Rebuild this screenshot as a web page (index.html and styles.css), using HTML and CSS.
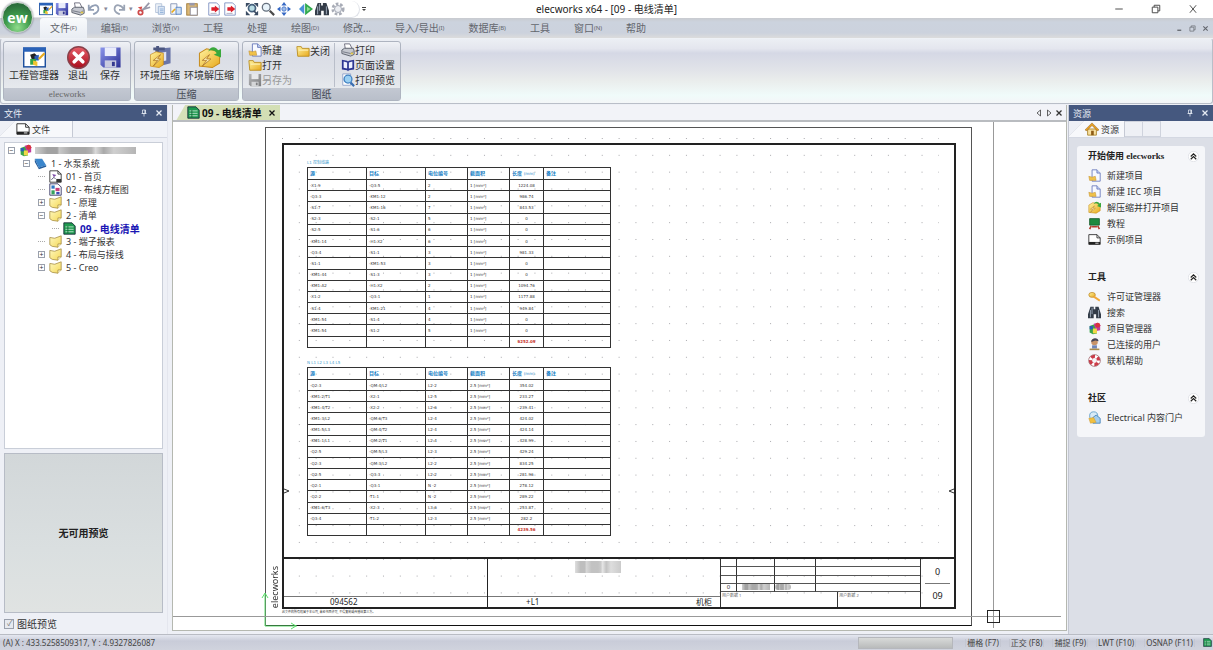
FILE: index.html
```html
<!DOCTYPE html>
<html lang="zh-CN">
<head>
<meta charset="utf-8">
<title>elecworks x64 - [09 - 电线清单]</title>
<link rel="stylesheet" href="styles.css">
</head>
<body>
<svg class="defs" aria-hidden="true">
  <defs>
    <linearGradient id="g-red" x1="0" y1="0" x2="0" y2="1"><stop offset="0" stop-color="#e8606a"/><stop offset="1" stop-color="#a80c1c"/></linearGradient>
    <linearGradient id="g-yel" x1="0" y1="0" x2="1" y2="1"><stop offset="0" stop-color="#fff3a0"/><stop offset="1" stop-color="#e8a91c"/></linearGradient>
    <linearGradient id="g-blu" x1="0" y1="0" x2="1" y2="1"><stop offset="0" stop-color="#8c96ec"/><stop offset="1" stop-color="#2b2f94"/></linearGradient>
    <linearGradient id="g-note" x1="0" y1="0" x2="1" y2="1"><stop offset="0" stop-color="#fff9c0"/><stop offset="1" stop-color="#f4d858"/></linearGradient>
  </defs>
  <symbol id="manager" viewBox="0 0 16 16"><rect x=".5" y="1.500" width="15" height="13" fill="#fff" stroke="#1d4f9e"/><path d="M0 1h16v3H0z" fill="#2a62b8"/><path d="M5 6l3-1 2 2v2H6z" fill="#222"/><path d="M8 7l3-1v4H8z" fill="#2c5db8"/><path d="M5 9h4v4H5z" fill="#35a548"/><path d="M7 10l3 1v3l-3-1z" fill="#f4c430"/><path d="M15 5l-4 4" stroke="#e8a91c" stroke-width="1.500"/></symbol>
  <symbol id="save" viewBox="0 0 16 16"><path d="M1 1h14v14H3l-2-2z" fill="url(#g-blu)"/><path d="M4 1h8v6H4z" fill="#e9ecfb"/><path d="M4 10h8v5H4z" fill="#c9cbe0"/><path d="M9 11h2v3H9z" fill="#34388f"/></symbol>
  <symbol id="print" viewBox="0 0 16 16"><path d="M4 1h6l3 6H5z" fill="#fff" stroke="#667"/><path d="M1 8l3-2h10l1 3v4l-4 2-10-3z" fill="#c4c7cf" stroke="#555a66"/><path d="M2 10l9 2 3-2" stroke="#6f7480" fill="none"/><path d="M11 11h3v2h-3z" fill="#e5c94c"/></symbol>
  <symbol id="undo" viewBox="0 0 16 16"><path d="M2 3v6h6M3 8c2-5 9-6 10-1s-4 6-6 7" fill="none" stroke="#929fb5" stroke-width="2"/></symbol>
  <symbol id="redo" viewBox="0 0 16 16"><path d="M14 3v6H8M13 8C11 3 4 2 3 7s4 6 6 7" fill="none" stroke="#9ba4b4" stroke-width="2"/></symbol>
  <symbol id="cut" viewBox="0 0 16 16"><path d="M14 1L5 11M15 6L5 9" stroke="#99a" stroke-width="2"/><circle cx="4" cy="12" r="2.500" fill="none" stroke="#cf4a4a" stroke-width="2"/><path d="M1 6l5-1-1 4z" fill="#d8504c"/></symbol>
  <symbol id="copy" viewBox="0 0 16 16"><path d="M3 2h7v10H3z" fill="#eef2f8" stroke="#b4c2d8"/><path d="M6 5h7v9H6z" fill="#dbe6f4" stroke="#9cb2d2"/><path d="M8 8h4M8 10h4M8 12h4" stroke="#8fb0d8"/></symbol>
  <symbol id="copyp" viewBox="0 0 16 16"><path d="M2 2h7v12H2z" fill="#f4f6fa" stroke="#8492b4"/><path d="M8 6h6v8H8z" fill="#cfe0f4" stroke="#4f7fc0"/><path d="M3 12l4-4" stroke="#e8a91c" stroke-width="2"/></symbol>
  <symbol id="paste" viewBox="0 0 16 16"><rect x="2" y="2" width="12" height="13" fill="#dcb876" stroke="#9c7534"/><path d="M5 1h6v3H5z" fill="#99a"/><path d="M6 6h8v9H6z" fill="#fff" stroke="#889"/></symbol>
  <symbol id="page" viewBox="0 0 16 16"><path d="M2 1h9l3 3v11H2z" fill="#fff" stroke="#7b8fc0"/><path d="M4 13h7" stroke="#aab"/><path d="M5 6h4V4l5 4-5 4v-2H5z" fill="#dc1f2b"/></symbol>
  <symbol id="zoomfit" viewBox="0 0 16 16"><path d="M1 1h5L1 6zM15 1v5l-5-5zM1 15v-5l5 5zM15 15h-5l5-5z" fill="#3a4b63"/><circle cx="8" cy="7" r="4" fill="#b8dce4" stroke="#47627e" stroke-width="2"/><path d="M10 10l4 4" stroke="#3a4b63" stroke-width="2"/></symbol>
  <symbol id="lens" viewBox="0 0 16 16"><circle cx="6" cy="6" r="4.500" fill="#e8f3fa" stroke="#66707e" stroke-width="1.500"/><path d="M10 10l5 5" stroke="#4a4a4a" stroke-width="2.500"/></symbol>
  <symbol id="move" viewBox="0 0 16 16"><path d="M8 0l3 4H5zM8 16l3-4H5zM0 8l4-3v6zM16 8l-4-3v6z" fill="#3568c4"/><circle cx="8" cy="8" r="2.500" fill="#9dbcea" stroke="#4a77c8"/></symbol>
  <symbol id="swap" viewBox="0 0 16 16"><path d="M0 8l6-6v12z" fill="#4b91d8"/><path d="M7 1v14l9-7z" fill="#2fa84c"/><path d="M9 5v6l4-3z" fill="#8fdf94"/></symbol>
  <symbol id="bino" viewBox="0 0 16 16"><path d="M3 1h4v3h2V1h4l3 9v5h-6v-5H7v5H0v-5z" fill="#333c48"/><path d="M3 5v9M5 2v8M13 5v9" stroke="#a9b6c6"/></symbol>
  <symbol id="gear" viewBox="0 0 16 16"><circle cx="8" cy="8" r="6" fill="none" stroke="#a8acb6" stroke-width="3" stroke-dasharray="3 2"/><circle cx="8" cy="8" r="4" fill="#eceef2" stroke="#989daa"/></symbol>
  <symbol id="quit" viewBox="0 0 16 16"><circle cx="8" cy="8" r="7.500" fill="url(#g-red)" stroke="#88404a"/><path d="M5 5l6 6M11 5l-6 6" stroke="#fff" stroke-width="2.500" stroke-linecap="round"/></symbol>
  <symbol id="zip" viewBox="0 0 16 16"><path d="M4 2l11-1v11l-8 2z" fill="#6975a8"/><path d="M7 5l5-1v6l-4 1z" fill="#dfe3f2"/><path d="M3 1h8v2H3zM5 0h2v4H5z" fill="#4b5680"/><path d="M1 6l4-2 5 1v8l-3 2-6-1z" fill="url(#g-yel)" stroke="#c78c1c" stroke-width=".5"/><path d="M8 6L3 10h3l-3 4 5-5H6z" fill="#fff3b8" stroke="#a5691c" stroke-width=".5"/></symbol>
  <symbol id="unzip" viewBox="0 0 16 16"><path d="M1 5l5-3 9 2v8l-5 3-9-1z" fill="url(#g-yel)" stroke="#c78c1c" stroke-width=".7"/><path d="M7 4c2-5 6-3 7-1l2-1v6l-5-2 2-1c-1-2-4-3-6-1z" fill="#3aa83c"/><path d="M8 6L3 10h3l-3 4 6-5H6z" fill="#fff3b8" stroke="#a5691c" stroke-width=".5"/></symbol>
  <symbol id="newdoc" viewBox="0 0 16 16"><path d="M5 1h6l4 4v10H5z" fill="#f7f9ff" stroke="#6173b8"/><path d="M11 1v4h4" fill="#c4d2f4" stroke="#6173b8"/><path d="M1 9l4 1 4-1 1 5H2z" fill="#f0c24a" stroke="#c08c2c" stroke-width=".6"/></symbol>
  <symbol id="folder" viewBox="0 0 16 16"><path d="M1 3h5l1 2h8v9H2z" fill="url(#g-yel)" stroke="#b98c1d"/><path d="M3 7h11" stroke="#fff8c8"/></symbol>
  <symbol id="book" viewBox="0 0 16 16"><path d="M1 2l6 1 1 1 1-1 6-1v11l-6 1-1 1-1-1-6-1z" fill="#2d3692"/><path d="M3 4l4 1v7l-4-1zM9 5l4-1v7l-4 1z" fill="#eef1ff"/></symbol>
  <symbol id="preview" viewBox="0 0 16 16"><path d="M2 1h9v13H2z" fill="#fff" stroke="#8ea0c8"/><circle cx="8" cy="7" r="4.500" fill="#9bd0f2" stroke="#3f7fc0" stroke-width="1.500"/><path d="M11 11l4 4" stroke="#3a6eb0" stroke-width="2.500"/></symbol>
  <symbol id="sheet" viewBox="0 0 16 16"><path d="M1 2h10l4 4v8H1z" fill="#fff" stroke="#222"/><path d="M1 11h14v3H1z" fill="#222"/><path d="M9 12h4v1H9z" fill="#fff"/><path d="M11 2v4h4" fill="none" stroke="#222"/></symbol>
  <symbol id="project" viewBox="0 0 16 16"><path d="M2 5l5-2 4 2v9l-5 1-4-2z" fill="#3aa54a"/><path d="M7 2l5-1 3 3v6l-5 1z" fill="#c23a9c"/><circle cx="12" cy="4" r="3" fill="#d8333f"/><path d="M6 8h5v6H6z" fill="#f2d848"/><path d="M2 5h4v4H2z" fill="#2c5db8"/></symbol>
  <symbol id="bookb" viewBox="0 0 16 16"><path d="M1 2l9 0 5 8-9 3z" fill="#3b86cc"/><path d="M1 2v4l5 9 9-3v-2l-9 3z" fill="#235c9c"/></symbol>
  <symbol id="cover" viewBox="0 0 16 16"><path d="M1 1h10l4 4v10H1z" fill="#fff" stroke="#222"/><path d="M11 1v4h4" fill="none" stroke="#222"/><path d="M4 5l5 1-3 3z" fill="#7d4ca8"/><path d="M3 12l3-3 2 2" stroke="#335" fill="none"/><path d="M9 11h6v4H9z" fill="#333"/></symbol>
  <symbol id="diagram" viewBox="0 0 16 16"><path d="M1 1h10l4 4v10H1z" fill="#fff" stroke="#225"/><path d="M3 3h4v4H3z" fill="#2f78c4"/><path d="M8 6h5v4H8z" fill="#c83f7c"/><path d="M3 9h4v5H3z" fill="#35a05c"/><path d="M9 11h4v3H9z" fill="#3b4bb8"/></symbol>
  <symbol id="note" viewBox="0 0 16 16"><path d="M1 3l6 1 8-3v10l-4 4-7-1-3-2z" fill="url(#g-note)" stroke="#a8904a"/><path d="M15 11h-4v4" fill="#fffad0" stroke="#a8904a"/></symbol>
  <symbol id="list" viewBox="0 0 16 16"><path d="M1 1h10l4 4v10H1z" fill="#1f9a50" stroke="#123"/><path d="M3 6h10M3 9h10M3 12h10" stroke="#cfeedd"/><path d="M6 5v9" stroke="#0e5a30"/></symbol>
  <symbol id="home" viewBox="0 0 16 16"><path d="M3 8h10v7H3z" fill="#f8e0a0" stroke="#a8842a"/><path d="M0 9l8-8 8 8-2 1-6-6-6 6z" fill="#e8a022" stroke="#8c5a14" stroke-width=".6"/><path d="M7 10h3v5H7z" fill="#8c5a14"/></symbol>
  <symbol id="board" viewBox="0 0 16 16"><path d="M2 2h12v8H2z" fill="#1f8a3f" stroke="#145a2a"/><path d="M4 11l-2 4M12 11l2 4M5 12h6" stroke="#b23c2c" stroke-width="2"/></symbol>
  <symbol id="key" viewBox="0 0 16 16"><ellipse cx="5" cy="6" rx="4" ry="3" fill="url(#g-yel)" stroke="#c08c2c"/><path d="M8 7l7 5-1 2-8-5z" fill="#f0a83a"/></symbol>
  <symbol id="user" viewBox="0 0 16 16"><circle cx="8" cy="5" r="4" fill="#c89468"/><path d="M4 5c0-6 9-6 9-1L9 3z" fill="#445"/><path d="M5 9h6v4H5z" fill="#6f86b8"/><path d="M2 14h12" stroke="#a88c4c" stroke-width="2"/></symbol>
  <symbol id="buoy" viewBox="0 0 16 16"><circle cx="8" cy="8" r="5" fill="none" stroke="#cc3b48" stroke-width="4"/><circle cx="8" cy="8" r="5" fill="none" stroke="#fff" stroke-width="4" stroke-dasharray="3 4.850"/><circle cx="8" cy="8" r="7.300" fill="none" stroke="#8c4a52" stroke-width=".7"/></symbol>
  <symbol id="portal" viewBox="0 0 16 16"><circle cx="7" cy="6" r="5" fill="#d8eaf6" stroke="#589ac8"/><path d="M6 8l4-3 5 4v6H6z" fill="#a4cdec" stroke="#3f80b8"/><path d="M1 9l6-1 3 6-7 1z" fill="#f0c040" stroke="#c08c2c" stroke-width=".5"/></symbol>
  <symbol id="pin" viewBox="0 0 16 16"><path d="M5 2h6v7H5zM3 9h10M8 9v6" fill="none" stroke="currentColor" stroke-width="1.500"/><path d="M9 2h2v7H9z" fill="currentColor"/></symbol>
  <symbol id="cross" viewBox="0 0 16 16"><path d="M3 3l10 10M13 3L3 13" stroke="currentColor" stroke-width="2.500"/></symbol>
  <symbol id="thin" viewBox="0 0 16 16"><path d="M3 2l10 12M13 2L3 14" stroke="currentColor" stroke-width="1.500"/></symbol>
  <symbol id="restore" viewBox="0 0 16 16"><path d="M5 5V2h9v9h-3M2 5h9v9H2z" fill="none" stroke="currentColor" stroke-width="1.500"/></symbol>
  <symbol id="minus" viewBox="0 0 16 16"><path d="M2 8h12" stroke="currentColor" stroke-width="1.500"/></symbol>
  <symbol id="low" viewBox="0 0 16 16"><path d="M3 12h9" stroke="currentColor" stroke-width="3"/></symbol>
  <symbol id="left" viewBox="0 0 16 16"><path d="M11 2v12L4 8z" fill="none" stroke="currentColor" stroke-width="1.500"/></symbol>
  <symbol id="right" viewBox="0 0 16 16"><path d="M5 2v12l7-6z" fill="none" stroke="currentColor" stroke-width="1.500"/></symbol>
  <symbol id="chev" viewBox="0 0 16 16"><circle cx="8" cy="8" r="7.500" fill="#fff" stroke="#d8dbe2"/><path d="M4 8l4-4 4 4M4 12l4-4 4 4" fill="none" stroke="#222" stroke-width="1.700"/></symbol>
  <symbol id="more" viewBox="0 0 16 16"><path d="M4 5h8" stroke="#444" stroke-width="2"/><path d="M4 8h8l-4 4z" fill="#444"/></symbol>
</svg>

<div class="app">
  <header class="titlebar">
    <button class="orb" aria-label="elecworks">ew</button>
    <div class="quick">
      <button aria-label="工程管理器"><svg><use href="#manager"/></svg></button>
      <button aria-label="保存"><svg><use href="#save"/></svg></button>
      <button aria-label="打印"><svg><use href="#print"/></svg></button>
      <button class="drop" aria-label="撤销"><svg><use href="#undo"/></svg></button>
      <button class="drop" aria-label="重做"><svg><use href="#redo"/></svg></button>
      <button aria-label="剪切"><svg><use href="#cut"/></svg></button>
      <button aria-label="复制"><svg><use href="#copy"/></svg></button>
      <button aria-label="特殊复制"><svg><use href="#copyp"/></svg></button>
      <button aria-label="粘贴"><svg><use href="#paste"/></svg></button>
      <button class="apart" aria-label="上一图纸"><svg><use href="#page"/></svg></button>
      <button aria-label="下一图纸"><svg><use href="#page"/></svg></button>
      <button class="apart" aria-label="缩放至适合"><svg><use href="#zoomfit"/></svg></button>
      <button aria-label="缩放"><svg><use href="#lens"/></svg></button>
      <button aria-label="平移"><svg><use href="#move"/></svg></button>
      <button class="apart" aria-label="转到"><svg><use href="#swap"/></svg></button>
      <button aria-label="搜索"><svg><use href="#bino"/></svg></button>
      <button aria-label="设置"><svg><use href="#gear"/></svg></button>
    </div>
    <button class="more" aria-label="自定义"><svg><use href="#more"/></svg></button>
    <h1 class="caption">elecworks x64 - [09 - 电线清单]</h1>
    <div class="winbtns">
      <button aria-label="最小化"><svg><use href="#minus"/></svg></button>
      <button aria-label="还原"><svg><use href="#restore"/></svg></button>
      <button aria-label="关闭"><svg><use href="#thin"/></svg></button>
    </div>
  </header>

  <nav class="menu">
    <button class="on">文件<small>(F)</small></button>
    <button>编辑<small>(E)</small></button>
    <button>浏览<small>(V)</small></button>
    <button>工程</button>
    <button>处理</button>
    <button>绘图<small>(D)</small></button>
    <button>修改...</button>
    <button>导入/导出<small>(I)</small></button>
    <button>数据库<small>(B)</small></button>
    <button>工具</button>
    <button>窗口<small>(N)</small></button>
    <button>帮助</button>
    <div class="docbtns">
      <button aria-label="最小化图纸"><svg><use href="#low"/></svg></button>
      <button aria-label="还原图纸"><svg><use href="#restore"/></svg></button>
      <button aria-label="关闭图纸"><svg><use href="#cross"/></svg></button>
    </div>
  </nav>

  <div class="ribbon">
    <section class="group">
      <div class="tools big">
        <button><svg><use href="#manager"/></svg>工程管理器</button>
        <button><svg><use href="#quit"/></svg>退出</button>
        <button><svg><use href="#save"/></svg>保存</button>
      </div>
      <h2 class="latin">elecworks</h2>
    </section>
    <section class="group">
      <div class="tools big tight">
        <button><svg><use href="#zip"/></svg>环境压缩</button>
        <button><svg><use href="#unzip"/></svg>环境解压缩</button>
      </div>
      <h2>压缩</h2>
    </section>
    <section class="group">
      <div class="tools small">
        <div class="stack">
          <button><svg><use href="#newdoc"/></svg>新建</button>
          <button><svg><use href="#folder"/></svg>打开</button>
          <button class="off" disabled><svg><use href="#save"/></svg>另存为</button>
        </div>
        <div class="stack">
          <button><svg><use href="#folder"/></svg>关闭</button>
        </div>
        <div class="stack ruled">
          <button><svg><use href="#print"/></svg>打印</button>
          <button><svg><use href="#book"/></svg>页面设置</button>
          <button><svg><use href="#preview"/></svg>打印预览</button>
        </div>
      </div>
      <h2>图纸</h2>
    </section>
  </div>

  <div class="work">
    <aside class="side files">
      <div class="bar"><span>文件</span><button aria-label="固定"><svg><use href="#pin"/></svg></button><button aria-label="关闭"><svg><use href="#cross"/></svg></button></div>
      <div class="tabs"><button class="tab"><svg><use href="#sheet"/></svg>文件</button></div>
      <div class="treebox">
        <ul class="tree">
          <li><i class="tw">−</i><svg><use href="#project"/></svg><span class="mosaic"></span></li>
          <li class="l1"><i class="tw">−</i><svg><use href="#bookb"/></svg>1 - 水泵系统</li>
          <li class="l2"><i class="ln"></i><svg><use href="#cover"/></svg>01 - 首页</li>
          <li class="l2"><i class="ln"></i><svg><use href="#diagram"/></svg>02 - 布线方框图</li>
          <li class="l2"><i class="tw">+</i><svg><use href="#note"/></svg>1 - 原理</li>
          <li class="l2"><i class="tw">−</i><svg><use href="#note"/></svg>2 - 清单</li>
          <li class="l3 cur"><i class="ln"></i><svg><use href="#list"/></svg>09 - 电线清单</li>
          <li class="l2"><i class="ln"></i><svg><use href="#note"/></svg>3 - 端子报表</li>
          <li class="l2"><i class="tw">+</i><svg><use href="#note"/></svg>4 - 布局与接线</li>
          <li class="l2"><i class="tw">+</i><svg><use href="#note"/></svg>5 - Creo</li>
        </ul>
      </div>
      <div class="nopreview">无可用预览</div>
      <label class="check"><input type="checkbox" checked>图纸预览</label>
    </aside>

    <main class="doc">
      <div class="doctabs">
        <button class="doctab"><svg><use href="#list"/></svg>09 - 电线清单<svg class="x"><use href="#cross"/></svg></button>
        <div class="docnav">
          <button aria-label="上一个"><svg><use href="#left"/></svg></button>
          <button aria-label="下一个"><svg><use href="#right"/></svg></button>
          <button aria-label="关闭"><svg><use href="#cross"/></svg></button>
        </div>
      </div>
      <div class="canvas">
        <div class="sheet">
          <svg class="dots"><defs><pattern id="dot" width="16.830" height="16.830" patternUnits="userSpaceOnUse"><rect width="1" height="1" fill="#a9a9ac"/></pattern></defs><rect width="100%" height="100%" fill="url(#dot)"/></svg>
          <div class="brand">elecworks</div>
          <div class="frame">
            <svg class="mark l" viewBox="0 0 6 6"><path d="M0 1l5 2-5 2" fill="none" stroke="#333"/></svg>
            <svg class="mark r" viewBox="0 0 6 6"><path d="M6 1L1 3l5 2" fill="none" stroke="#333"/></svg>
            <div class="lists">
              <table class="wires first">
                <caption>L1 控制线路</caption>
                <thead><tr><th>源</th><th>目标</th><th>电位编号</th><th>截面积</th><th>长度 <small>(mm)</small></th><th>备注</th></tr></thead>
                <tbody>
                <tr><td>-X1:9</td><td>-Q3:5</td><td>2</td><td>1 [mm²]</td><td>1224.08</td><td></td></tr>
                <tr><td>-Q3:3</td><td>-KM1:12</td><td>2</td><td>1 [mm²]</td><td>986.74</td><td></td></tr>
                <tr><td>-S1:7</td><td>-KM1:16</td><td>7</td><td>1 [mm²]</td><td>843.53</td><td></td></tr>
                <tr><td>-S2:3</td><td>-S2:1</td><td>5</td><td>1 [mm²]</td><td>0</td><td></td></tr>
                <tr><td>-S2:5</td><td>-S1:6</td><td>6</td><td>1 [mm²]</td><td>0</td><td></td></tr>
                <tr><td>-KM1:14</td><td>-H1:X2</td><td>6</td><td>1 [mm²]</td><td>0</td><td></td></tr>
                <tr><td>-Q3:4</td><td>-S1:1</td><td>3</td><td>1 [mm²]</td><td>981.33</td><td></td></tr>
                <tr><td>-S1:1</td><td>-KM1:53</td><td>3</td><td>1 [mm²]</td><td>0</td><td></td></tr>
                <tr><td>-KM1:44</td><td>-S1:3</td><td>3</td><td>1 [mm²]</td><td>0</td><td></td></tr>
                <tr><td>-KM1:A2</td><td>-H1:X2</td><td>2</td><td>1 [mm²]</td><td>1094.76</td><td></td></tr>
                <tr><td>-X1:2</td><td>-Q3:1</td><td>1</td><td>1 [mm²]</td><td>1177.88</td><td></td></tr>
                <tr><td>-S1:4</td><td>-KM1:21</td><td>4</td><td>1 [mm²]</td><td>949.84</td><td></td></tr>
                <tr><td>-KM1:54</td><td>-S1:4</td><td>4</td><td>1 [mm²]</td><td>0</td><td></td></tr>
                <tr><td>-KM1:54</td><td>-S1:2</td><td>5</td><td>1 [mm²]</td><td>0</td><td></td></tr>
                <tr><td></td><td></td><td></td><td></td><td class="sum">6252.09</td><td></td></tr>
                </tbody>
              </table>
              <table class="wires">
                <caption>N L1 L2 L3 L4 L5</caption>
                <thead><tr><th>源</th><th>目标</th><th>电位编号</th><th>截面积</th><th>长度 <small>(mm)</small></th><th>备注</th></tr></thead>
                <tbody>
                <tr><td>-Q2:3</td><td>-QM:4/L2</td><td>L2-2</td><td>2.5 [mm²]</td><td>354.02</td><td></td></tr>
                <tr><td>-KM1:2/T1</td><td>-X2:1</td><td>L2-5</td><td>2.5 [mm²]</td><td>233.27</td><td></td></tr>
                <tr><td>-KM1:4/T2</td><td>-X2:2</td><td>L2-6</td><td>2.5 [mm²]</td><td>239.41</td><td></td></tr>
                <tr><td>-KM1:3/L2</td><td>-QM:6/T3</td><td>L2-4</td><td>2.5 [mm²]</td><td>424.02</td><td></td></tr>
                <tr><td>-KM1:5/L3</td><td>-QM:4/T2</td><td>L2-4</td><td>2.5 [mm²]</td><td>424.14</td><td></td></tr>
                <tr><td>-KM1:1/L1</td><td>-QM:2/T1</td><td>L2-4</td><td>2.5 [mm²]</td><td>428.99</td><td></td></tr>
                <tr><td>-Q2:5</td><td>-QM:5/L3</td><td>L2-3</td><td>2.5 [mm²]</td><td>429.24</td><td></td></tr>
                <tr><td>-Q2:3</td><td>-QM:3/L2</td><td>L2-2</td><td>2.5 [mm²]</td><td>834.25</td><td></td></tr>
                <tr><td>-Q2:5</td><td>-Q3:3</td><td>L2-2</td><td>2.5 [mm²]</td><td>281.96</td><td></td></tr>
                <tr><td>-Q2:1</td><td>-Q3:1</td><td>N -2</td><td>2.5 [mm²]</td><td>278.12</td><td></td></tr>
                <tr><td>-Q2:2</td><td>-T1:1</td><td>N -2</td><td>2.5 [mm²]</td><td>289.22</td><td></td></tr>
                <tr><td>-KM1:6/T3</td><td>-X2:3</td><td>L3-6</td><td>2.5 [mm²]</td><td>253.87</td><td></td></tr>
                <tr><td>-Q3:4</td><td>-T1:2</td><td>L2-3</td><td>2.5 [mm²]</td><td>282.2</td><td></td></tr>
                <tr><td></td><td></td><td></td><td></td><td class="sum">4239.56</td><td></td></tr>
                </tbody>
              </table>
            </div>
            <div class="block">
              <div class="cell"><div></div><div class="foot mid">094562</div></div>
              <div class="cell ruledl"><div><span class="mosaic pale"></span></div><div class="foot loc"><span>+L1</span><span>机柜</span></div></div>
              <div class="rev">
                <div class="grid">
                  <i></i><i></i><i></i><i></i><i></i><i></i><i></i><i></i><i></i><i></i><i></i><i></i>
                  <i>0</i><i><span class="mosaic tiny"></span></i><i><span class="mosaic tiny part"></span></i><i></i>
                </div>
                <div class="udata"><span>用户数据 1</span><span>用户数据 2</span></div>
              </div>
              <div class="num"><span>0</span><span>09</span></div>
            </div>
          </div>
          <div class="tinynote">此文件的所有权属于本公司, 未经书面许可, 不得复制或传播给第三方。</div>
        </div>
        <svg class="ucs" viewBox="0 0 40 40"><path d="M4 36V4M1 8l3-5 3 5M4 36h32M30 33l5 3-5 3" fill="none" stroke="#5ee06e"/></svg>
        <i class="hline"></i><i class="vline"></i><i class="pick"></i>
      </div>
    </main>

    <aside class="side res">
      <div class="bar"><span>资源</span><button aria-label="固定"><svg><use href="#pin"/></svg></button><button aria-label="关闭"><svg><use href="#cross"/></svg></button></div>
      <div class="tabs"><button class="tab"><svg><use href="#home"/></svg>资源</button><i class="stub"></i><i class="stub"></i></div>
      <div class="card">
        <section>
          <h3>开始使用 elecworks<button aria-label="折叠"><svg><use href="#chev"/></svg></button></h3>
          <a href="#"><svg><use href="#newdoc"/></svg>新建项目</a>
          <a href="#"><svg><use href="#newdoc"/></svg>新建 IEC 项目</a>
          <a href="#"><svg><use href="#unzip"/></svg>解压缩并打开项目</a>
          <a href="#"><svg><use href="#board"/></svg>教程</a>
          <a href="#"><svg><use href="#sheet"/></svg>示例项目</a>
        </section>
        <section>
          <h3>工具<button aria-label="折叠"><svg><use href="#chev"/></svg></button></h3>
          <a href="#"><svg><use href="#key"/></svg>许可证管理器</a>
          <a href="#"><svg><use href="#bino"/></svg>搜索</a>
          <a href="#"><svg><use href="#project"/></svg>项目管理器</a>
          <a href="#"><svg><use href="#user"/></svg>已连接的用户</a>
          <a href="#"><svg><use href="#buoy"/></svg>联机帮助</a>
        </section>
        <section>
          <h3>社区<button aria-label="折叠"><svg><use href="#chev"/></svg></button></h3>
          <a href="#"><svg><use href="#portal"/></svg>Electrical 内容门户</a>
        </section>
      </div>
    </aside>
  </div>

  <footer class="status">
    <span class="coords">(A) X : 433.5258509317, Y : 4.9327826087</span>
    <span class="progress"></span>
    <button>栅格 (F7)</button>
    <button>正交 (F8)</button>
    <button>捕捉 (F9)</button>
    <button>LWT (F10)</button>
    <button>OSNAP (F11)</button>
    <svg><use href="#list"/></svg>
  </footer>
</div>
</body>
</html>
```
FILE: styles.css
```css
* { box-sizing: border-box; }
body { margin: 0; font: 10px/1 "Noto Sans", "Noto Sans CJK SC", sans-serif; color: #333; background: #eef0f6; }
button { font: inherit; color: inherit; background: none; border: 0; padding: 0; margin: 0; display: inline-flex; align-items: center; white-space: nowrap; }
svg { display: block; width: 14px; height: 14px; flex: none; }
h1, h2, h3, ul { margin: 0; padding: 0; font-weight: normal; font-size: 10px; list-style: none; }
i { font-style: normal; }
.defs { position: absolute; width: 0; height: 0; }
.app { height: 100vh; display: flex; flex-direction: column; overflow: hidden; }

/* title bar */
.titlebar { position: relative; height: 18px; flex: none; display: flex; align-items: center; background: #fff; padding-left: 33px; }
.orb { position: absolute; left: 2px; top: 2px; z-index: 2; width: 31px; height: 31px; border-radius: 50%; justify-content: center; color: #fff; font: bold 14px/1 "Open Sans", sans-serif; background: radial-gradient(circle at 50% 85%, #8fdc8c, #3d9a4b 45%, #2b6e3c 80%); border: 1px solid #b9c9bd; box-shadow: 0 0 2px #667; }
.quick { display: flex; align-items: center; height: 17px; gap: 2px; padding: 0 14px 0 6px; border: 1px solid #dfe2e8; border-left: 0; border-top: 0; border-radius: 0 9px 9px 0; }
.quick .drop::after { content: "▾"; width: 9px; font-size: 7px; color: #889; text-align: center; }
.quick .apart { margin-left: 6px; }
.more svg { width: 8px; height: 8px; }
.caption { position: absolute; left: 0; right: 0; text-align: center; font-size: 10px; color: #222; pointer-events: none; }
.winbtns { margin-left: auto; display: flex; gap: 27px; padding-right: 15px; color: #444; }
.winbtns svg { width: 10px; height: 10px; }

/* menu */
.menu { height: 20px; flex: none; display: flex; align-items: stretch; padding-left: 40px; background: linear-gradient(#c9cbd0, #ccd3de 20%, #ccd2dd 75%, #dcdcdc); color: #63666d; }
.menu > button { padding: 0 12px; }
.menu > .on { padding: 0 10px; margin-right: 2px; background: linear-gradient(#f8fafc, #e9edf3); border-radius: 3px 3px 0 0; }
.menu small { font-size: 6px; }
.docbtns { margin-left: auto; display: flex; align-items: center; gap: 6px; padding-right: 4px; }
.docbtns svg { width: 7px; height: 7px; }

/* ribbon */
.ribbon { height: 66px; flex: none; display: flex; gap: 3px; padding: 2px; border: 1px solid #b9bec8; border-top-color: #eef1f6; border-radius: 3px; background: linear-gradient(#eceff4, #e4e6ee 15%, #d5d8e5 22%, #e2e4e9 50%, #eaedec 65%, #f0fbfa 88%, #f4f6f8); }
.group { display: flex; flex-direction: column; border: 1px solid #aeb4c0; border-radius: 3px; background: linear-gradient(#f0f2f6, #dadde6 22%, #dfe2e8 55%, #eceff2); }
.group h2 { height: 12px; flex: none; display: flex; align-items: center; justify-content: center; background: linear-gradient(#c3c8d2, #b9bfca); color: #454a55; }
.group .latin { font: 9px/1 "Liberation Serif", serif; color: #666; }
.tools { flex: 1; min-height: 0; display: flex; }
.big { padding: 4px 7px 0 5px; gap: 6px; }
.big.tight { gap: 4px; padding: 4px 4px 0 5px; }
.big button { flex-direction: column; align-self: flex-start; gap: 1px; min-width: 26px; }
.big svg { width: 23px; height: 23px; }
.small { gap: 4px; padding: 1px 5px; }
.stack { display: flex; flex-direction: column; }
.stack button { height: 15px; }
.ruled { padding-left: 6px; border-left: 1px solid #b9bec9; }
.off { color: #999; }
.off svg { filter: grayscale(1); opacity: .6; }

/* work area */
.work { flex: 1; min-height: 0; display: flex; padding-top: 1px; }
.side { display: flex; flex-direction: column; flex: none; font-size: 9px; }
.files { width: 168px; border-right: 1px solid #e4e6ee; }
.res { width: 145px; background: #dcdfe7; border-left: 1px solid #c3c7d2; }
.bar { height: 16px; flex: none; display: flex; align-items: center; gap: 7px; padding: 0 4px; background: #45587f; color: #e6ebf4; font-size: 9px; }
.bar span { margin-right: auto; }
.bar svg { width: 8px; height: 8px; }
.tabs { height: 17px; flex: none; display: flex; background: #f1f3f8; border-bottom: 1px solid #d4d8e2; }
.tab { padding: 0 15px 0 16px; gap: 2px; border-right: 1px solid #c5c9d4; background: linear-gradient(135deg, #eef0f6 10px, #c8ccd6 10px, #f7f8fb 11px); }
.res .tab { padding-right: 5px; }
.files .tab { padding-right: 22px; }
.stub { width: 18px; border: 1px solid #cfd3dd; border-left: 0; background: #eef0f5; }
.files .tabs { margin-bottom: 4px; }
.treebox { flex: 1; margin: 0 4px 4px; border: 1px solid #c9ced8; background: #fff; padding: 1px 3px; }
.tree { display: grid; grid-auto-rows: 1fr; height: 127px; font-size: 9px; }
.tree li { display: flex; align-items: center; gap: 4px; white-space: nowrap; }
.tree .l1 { padding-left: 15px; }
.tree .l2 { padding-left: 30px; }
.tree .l3 { padding-left: 44px; }
.tree svg { width: 13px; height: 13px; }
.tree .cur { color: #1a16b4; font-weight: bold; font-size: 10px; }
.tw { width: 7px; height: 7px; border: 1px solid #9aa0ac; font-size: 7px; line-height: 5px; text-align: center; color: #333; }
.ln { width: 7px; border-top: 1px dotted #aaa; }
.mosaic { display: inline-block; width: 101px; height: 7px; margin-left: -1px; background: linear-gradient(90deg, #d0d0d0, #a2a2a2 12% 22%, #c8c8c8 24%, #a8a8a8 36% 50%, #b4b4b4 56%, #dadada 60%, #a9a9a9 68%, #cfcfcf 78%, #b5b5b5); }
.mosaic.pale { width: 46px; height: 12px; margin: 0; opacity: .7; }
.mosaic.tiny { width: 28px; height: 6px; margin: 0; }
.mosaic.part { width: 16px; border-radius: 3px; }
.nopreview { height: 160px; flex: none; margin: 0 4px; display: flex; align-items: center; justify-content: center; border: 1px solid #b7bcc6; background: linear-gradient(#d2d7d9, #dadfe0 60%, #e0e3e2); color: #222; font-weight: bold; font-size: 10px; }
.check { height: 21px; display: flex; align-items: center; gap: 3px; padding-left: 4px; font-size: 10px; }
.check input { width: 10px; height: 10px; margin: 0; appearance: none; border: 1px solid #9aa0ac; background: #e6e9ef; display: grid; place-items: center; }
.check input:checked::after { content: "✓"; font-size: 8px; line-height: 8px; color: #777; }

/* document */
.doc { flex: 1; min-width: 0; display: flex; flex-direction: column; margin: 0 1px 3px 4px; border: 1px solid #b5b8b0; border-top: 0; }
.doctabs { height: 17px; flex: none; display: flex; background: #f2f3f8; border-bottom: 2px solid #b9bcc0; }
.doctab { padding: 0 4px 0 14px; gap: 2px; background: linear-gradient(120deg, #f2f3f8 10px, #d6e0b8 11px, #d3dfb4); color: #111; font-weight: bold; font-size: 10px; }
.doctab svg { width: 13px; height: 13px; }
.doctab .x { width: 8px; height: 8px; margin-left: 4px; }
.docnav { margin-left: auto; display: flex; align-items: center; gap: 2px; padding-right: 3px; }
.docnav svg { width: 8px; height: 8px; }
.canvas { position: relative; flex: 1; min-height: 0; background: #fff; display: flex; padding: 5px 94px 4px 92px; }
.sheet { position: relative; flex: 1; display: flex; flex-direction: column; border: 1px solid #555; border-bottom-color: #111; padding: 15px 15px 0 16px; }
.dots { position: absolute; left: 16px; top: 10px; width: calc(100% - 48px); height: calc(100% - 40px); }
.brand { position: absolute; left: 4px; bottom: 17px; writing-mode: vertical-rl; transform: rotate(180deg); font: 9px/1 "Noto Sans", sans-serif; color: #333; }
.frame { position: relative; flex: 1; display: flex; flex-direction: column; justify-content: space-between; border: 2px solid #222; }
.mark { position: absolute; top: 343px; width: 6px; height: 6px; }
.mark.l { left: 0; }
.mark.r { right: 0; }
.lists { padding: 15px 0 0 23px; width: 328px; }
.wires { width: 304px; height: 169px; border-collapse: collapse; table-layout: fixed; font: 4px/5px "DejaVu Sans", "Noto Sans CJK SC", sans-serif; color: #333; }
.wires.first { height: 181px; margin-bottom: 12px; }
.wires caption { text-align: left; color: #4a9fd0; height: 7px; }
.wires th, .wires td { border: 1px solid #333; padding: 0 2px; text-align: left; overflow: hidden; white-space: nowrap; }
.wires th { height: 12px; color: #1780c4; font-size: 5px; }
.wires th small { font-size: 4px; font-weight: normal; }
.wires th:nth-child(-n+2) { width: 59px; }
.wires th:nth-child(3), .wires th:nth-child(4) { width: 42px; }
.wires th:nth-child(5) { width: 34px; }
.wires td:nth-child(5) { text-align: center; }
.wires .sum { color: #c8342c; font-weight: bold; }
.block { height: 50px; display: grid; grid-template-columns: 204fr 234fr 202fr 33fr; border-top: 2px solid #222; }
.cell { display: grid; grid-template-rows: 1fr 11px; color: #222; font-size: 8px; }
.ruledl { border-left: 1px solid #222; }
.ruledl > div:first-child { text-align: center; padding: 2px 12px 0 0; }
.foot { border-top: 1px solid #777; display: flex; align-items: center; justify-content: space-between; padding: 0 8px 0 38px; }
.foot.mid { padding-left: 46px; }
.rev { display: grid; grid-template-rows: 33px 1fr; border-left: 1px solid #333; border-right: 1px solid #333; font-size: 6px; }
.grid { display: grid; grid-template-columns: 16px 38px 41px 1fr; grid-auto-rows: 1fr; }
.grid i { border-right: 1px solid #333; border-bottom: 1px solid #555; display: flex; align-items: center; justify-content: center; }
.grid i:nth-child(4n) { border-right: 0; }
.grid i:nth-child(15) { justify-content: flex-start; }
.udata { display: grid; grid-template-columns: 118fr 84fr; font-size: 4px; color: #666; }
.udata span { padding: 2px 1px; }
.udata span + span { border-left: 1px solid #333; }
.num { display: grid; grid-template-rows: 1fr 1fr; padding: 0 4px; text-align: center; font-size: 9px; color: #222; }
.num span { display: flex; align-items: center; justify-content: center; }
.num span + span { border-top: 1px solid #777; }
.tinynote { height: 16px; flex: none; font-size: 3px; line-height: 7px; color: #333; white-space: nowrap; }
.ucs { position: absolute; left: 88px; bottom: 0; width: 40px; height: 40px; }
.hline { position: absolute; left: 0; right: 5px; bottom: 13px; border-top: 1px solid #999; }
.vline { position: absolute; right: 72px; top: 0; bottom: 2px; border-left: 1px solid #999; }
.pick { position: absolute; right: 66px; bottom: 7px; width: 13px; height: 13px; border: 1px solid #222; }

/* resources */
.card { margin: 8px 8px 0 8px; padding: 0 4px 12px 11px; border-radius: 3px; background: #f5f6f9; }
.card section + section { margin-top: 20px; }
.card h3 { height: 21px; display: flex; align-items: center; justify-content: space-between; padding-right: 2px; font: bold 9px/1 "Liberation Serif", "Noto Sans CJK SC", serif; color: #222; }
.card h3 svg { width: 11px; height: 11px; }
.card a { height: 16px; display: flex; align-items: center; gap: 6px; color: #333; text-decoration: none; white-space: nowrap; }
.card a svg { width: 13px; height: 13px; }

/* status bar */
.status { height: 16px; flex: none; display: flex; align-items: center; gap: 8px; padding: 0 1px 0 3px; background: linear-gradient(#e4e7f0, #c9ccd9 40%, #d0d3dd); border-top: 1px solid #b9bcc4; font-size: 8px; color: #444; }
.coords { margin-right: auto; }
.progress { width: 95px; height: 12px; margin-right: 4px; border: 1px solid #b5b7bc; background: linear-gradient(#d8dad9, #b9bbbb); }
.status button { padding: 0 1px; border: 1px solid #c4c7d2; border-width: 0 1px; }
.status svg { width: 9px; height: 9px; }
```
